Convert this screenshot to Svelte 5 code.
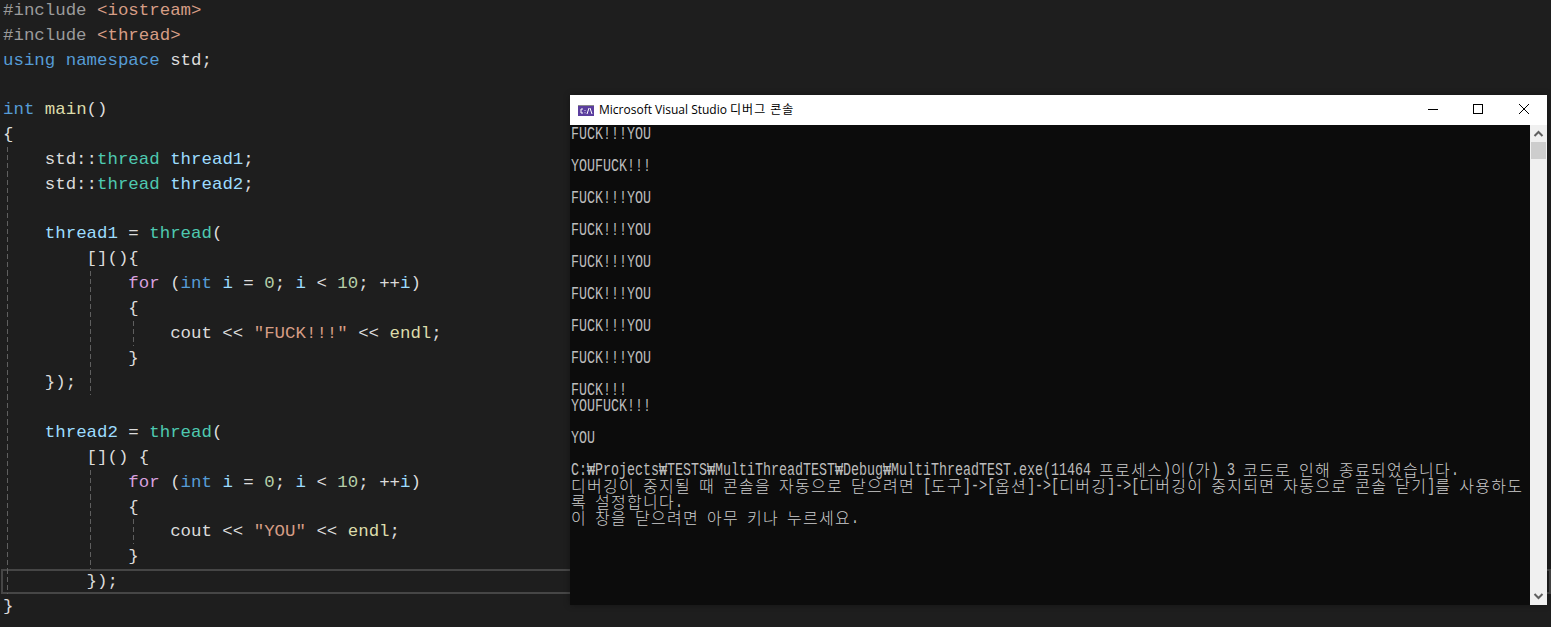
<script>
  const forLine = [['t','            '],['k2','for'],['t',' ('],['k','int'],['t',' '],['v','i'],['t',' = '],['n','0'],['t','; '],['v','i'],['t',' < '],['n','10'],['t','; ++'],['v','i'],['t',')']];
  const code = [
    { s: [['pp','#include '],['st','<iostream>']], g: [] },
    { s: [['pp','#include '],['st','<thread>']], g: [] },
    { s: [['k','using'],['t',' '],['k','namespace'],['t',' std;']], g: [] },
    { s: [], g: [] },
    { s: [['k','int'],['t',' '],['f','main'],['t','()']], g: [] },
    { s: [['t','{']], g: [] },
    { s: [['t','    std::'],['ty','thread'],['t',' '],['v','thread1'],['t',';']], g: ['a'] },
    { s: [['t','    std::'],['ty','thread'],['t',' '],['v','thread2'],['t',';']], g: ['a'] },
    { s: [], g: ['a'] },
    { s: [['t','    '],['v','thread1'],['t',' = '],['ty','thread'],['t','(']], g: ['a'] },
    { s: [['t','        [](){']], g: ['a'] },
    { s: forLine, g: ['a','b'] },
    { s: [['t','            {']], g: ['a','b'] },
    { s: [['t','                cout << '],['st','"FUCK!!!"'],['t',' << '],['f','endl'],['t',';']], g: ['a','b','c'] },
    { s: [['t','            }']], g: ['a','b'] },
    { s: [['t','    });']], g: ['a','b'] },
    { s: [], g: ['a'] },
    { s: [['t','    '],['v','thread2'],['t',' = '],['ty','thread'],['t','(']], g: ['a'] },
    { s: [['t','        []() {']], g: ['a'] },
    { s: forLine, g: ['a','b'] },
    { s: [['t','            {']], g: ['a','b'] },
    { s: [['t','                cout << '],['st','"YOU"'],['t',' << '],['f','endl'],['t',';']], g: ['a','b','c'] },
    { s: [['t','            }']], g: ['a','b'] },
    { s: [['t','        });']], g: ['a'], cur: true },
    { s: [['t','}']], g: [] }
  ];
  const consoleText = [
    'FUCK!!!YOU','','YOUFUCK!!!','','FUCK!!!YOU','','FUCK!!!YOU','','FUCK!!!YOU','','FUCK!!!YOU','','FUCK!!!YOU','','FUCK!!!YOU','',
    'FUCK!!!','YOUFUCK!!!','','YOU','',
    'C:₩Projects₩TESTS₩MultiThreadTEST₩Debug₩MultiThreadTEST.exe(11464 프로세스)이(가) 3 코드로 인해 종료되었습니다.',
    '디버깅이 중지될 때 콘솔을 자동으로 닫으려면 [도구]->[옵션]->[디버깅]->[디버깅이 중지되면 자동으로 콘솔 닫기]를 사용하도',
    '록 설정합니다.',
    '이 창을 닫으려면 아무 키나 누르세요.'
  ];
  const isH = (s) => /^[\uAC00-\uD7A3]/.test(s);
  const parts = (line) => line.split(/([\uAC00-\uD7A3]+)/).filter(Boolean);
</script>

<div class="editor">
  <div class="code">
    {#each code as line}
      <div class="line" class:cur={line.cur}>{#each line.g as g}<i class="guide {g}"></i>{/each}{#each line.s as tok}<span class={tok[0]}>{tok[1]}</span>{/each}</div>
    {/each}
  </div>

  <section class="win">
    <header class="title">
      <svg class="ico" width="16" height="11" viewBox="0 0 16 11">
        <rect width="16" height="11" fill="#5b3e9e"/>
        <rect x="0" y="0" width="16" height="1" fill="#8a8a8a"/>
        <path d="M5 4H3v4h2M7 5v0.8M7 7.4v0.8M11 3L9 9M12 3l2 6" stroke="#fff" fill="none" stroke-width="1"/>
      </svg>
      <span class="name">Microsoft Visual Studio <span class="tk">디버그 콘솔</span></span>
      <div class="btns">
        <svg width="45" height="30" viewBox="0 0 45 30"><path d="M18 14.500h10" stroke="#000"/></svg>
        <svg width="45" height="30" viewBox="0 0 45 30"><rect x="18.500" y="9.500" width="9" height="9" fill="none" stroke="#000"/></svg>
        <svg width="45" height="30" viewBox="0 0 45 30"><path d="M19 9l10 10M29 9l-10 10" stroke="#000" fill="none"/></svg>
      </div>
    </header>
    <div class="body">
      <div class="term">
        {#each consoleText as l}
          <div class="row">{#each parts(l) as p}<span class={isH(p) ? 'ko' : 'la'}>{p}</span>{/each}</div>
        {/each}
      </div>
      <div class="bar">
        <svg class="arrow" width="17" height="17" viewBox="0 0 17 17"><path d="M4.500 11L8.500 7l4 4" stroke="#606060" stroke-width="2" fill="none"/></svg>
        <div class="thumb"></div>
        <div class="gap"></div>
        <svg class="arrow" width="17" height="17" viewBox="0 0 17 17"><path d="M4.500 6l4 4 4-4" stroke="#606060" stroke-width="2" fill="none"/></svg>
      </div>
    </div>
  </section>
</div>

<style>
  :global(body) { margin: 0; background: #1e1e1e; }
  .editor {
    position: relative;
    width: 1551px;
    height: 627px;
    overflow: hidden;
    background: #1e1e1e;
  }
  .code {
    margin-top: -2px;
    padding-left: 3px;
    font-family: "Liberation Mono", "DejaVu Sans Mono", monospace;
    font-size: 17.42px;
    color: #dcdcdc;
  }
  .line {
    position: relative;
    height: 24.84px;
    line-height: 24.84px;
    white-space: pre;
  }
  .cur::before {
    content: "";
    position: absolute;
    left: -2px;
    right: 0;
    top: 0;
    height: 25px;
    box-sizing: border-box;
    border: 2px solid #464646;
  }
  .guide {
    position: absolute;
    top: 0;
    bottom: 0;
    width: 1px;
    background: repeating-linear-gradient(to bottom, #5f5f5f 0 5px, transparent 5px 8px);
  }
  .a { left: 4px; }
  .b { left: 87px; }
  .c { left: 130px; }
  .pp { color: #9b9b9b; }
  .st { color: #d69d85; }
  .k { color: #569cd6; }
  .k2 { color: #d8a0df; }
  .ty { color: #4ec9b0; }
  .v { color: #9cdcfe; }
  .f { color: #dcdcaa; }
  .n { color: #b5cea8; }
  .t { color: #dcdcdc; }

  .win {
    position: absolute;
    left: 570px;
    top: 95px;
    width: 977px;
    height: 510px;
    display: flex;
    flex-direction: column;
    background: #0c0c0c;
    box-shadow: 0 0 6px rgba(0, 0, 0, 0.35);
  }
  .title {
    flex: 0 0 30px;
    display: flex;
    align-items: center;
    background: #fff;
    color: #000;
    font-family: "Open Sans", "Noto Sans CJK KR", sans-serif;
    font-size: 12px;
    padding-left: 8px;
  }
  .ico { flex: none; margin-right: 5px; }
  .name { flex: 1; white-space: pre; margin-bottom: 2px; }
  .tk { letter-spacing: 1px; }
  .btns { display: flex; flex: none; margin-right: 2px; }
  .btns svg { display: block; }
  .body { flex: 1; display: flex; min-height: 0; }
  .term {
    flex: 1;
    padding-left: 1px;
    font-family: "Liberation Mono", monospace;
    font-size: 13.333px;
    color: #bdbdbd;
  }
  .row {
    height: 16px;
    line-height: 16px;
    white-space: pre;
  }
  .la {
    display: inline-block;
    vertical-align: top;
    transform: translateY(2px) scaleY(1.32);
  }
  .ko {
    display: inline-block;
    vertical-align: top;
    font-family: "Noto Sans CJK KR", sans-serif;
    font-size: 16px;
    letter-spacing: 1.28px;
    font-weight: 300;
    line-height: 16px;
    color: #cccccc;
  }
  .bar {
    flex: 0 0 17px;
    display: flex;
    flex-direction: column;
    background: #f0f0f0;
  }
  .arrow { flex: none; display: block; }
  .thumb { flex: 0 0 17px; margin: 0 1px; background: #cdcdcd; }
  .gap { flex: 1; }
</style>
